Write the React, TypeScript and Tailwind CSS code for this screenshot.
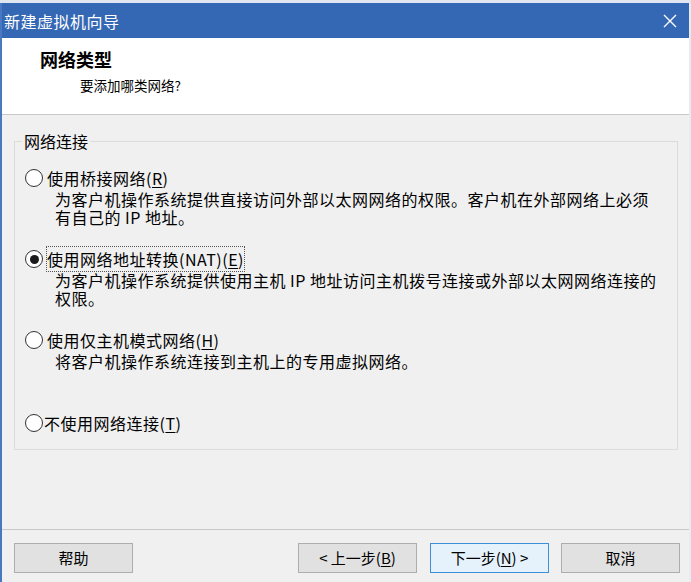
import React from "react";

const font = { fontFamily: '"Microsoft YaHei", "Noto Sans CJK SC", "Noto Sans", sans-serif' };

function Radio({ checked }: { checked?: boolean }) {
  return (
    <span className="w-[18px] h-[18px] rounded-full border border-[#333333] bg-white flex items-center justify-center shrink-0">
      {checked && <span className="w-[9px] h-[9px] rounded-full bg-[#1a1a1a]" />}
    </span>
  );
}

function U({ c }: { c: string }) {
  return <span className="underline underline-offset-2">{c}</span>;
}

function Btn({ children, primary, className = "" }: { children: React.ReactNode; primary?: boolean; className?: string }) {
  return (
    <div
      className={
        "h-[30px] w-[119px] flex items-center justify-center text-[15px] text-black border " +
        (primary ? "border-[#3c8fd9] bg-[#e5f1fb]" : "border-[#adadad] bg-[#e1e1e1]") +
        " " +
        className
      }
    >
      {children}
    </div>
  );
}

function Desc({ lines }: { lines: string[] }) {
  return (
    <div className="pl-[30px] mt-[1px] tracking-[0.5px]">
      {lines.map((l, i) => (
        <div key={i} className="h-[18px] leading-[18px] whitespace-nowrap">
          {l}
        </div>
      ))}
    </div>
  );
}

export default function App() {
  return (
    <div className="w-[691px] h-[582px] bg-[#f0f0f0] flex flex-col overflow-hidden" style={font}>
      <div className="h-[3px] bg-[#dfe6f0]" />
      <div className="flex flex-1 min-h-0">
        <div className="w-[2px] bg-[#4a78c0]" />
        <div className="flex-1 flex flex-col min-w-0">
          {/* title bar */}
          <div className="h-[35px] bg-[#3568b4] flex items-center justify-between pl-[2px] pr-[12px]">
            <span className="text-white text-[16px] tracking-[0.5px] leading-none">新建虚拟机向导</span>
            <svg width="14" height="14" viewBox="0 0 14 14">
              <path d="M1 1 L13 13 M13 1 L1 13" stroke="white" strokeWidth="1.4" />
            </svg>
          </div>
          {/* header */}
          <div className="h-[77px] bg-white border-b border-[#c8c8c8] pl-[38px] pt-[9px]">
            <div className="text-[18px] font-bold text-black leading-[24px]">网络类型</div>
            <div className="text-[13.5px] text-black leading-[22px] pl-[40px] mt-[3px]">要添加哪类网络?</div>
          </div>
          {/* body */}
          <div className="flex-1 flex flex-col">
            <div className="pl-[12px] pr-[11px] pt-[14px] h-[414px]">
              <div className="relative h-[309px] border border-[#dcdcdc] mt-[12px]">
                <span className="absolute -top-[12px] left-[7px] bg-[#f0f0f0] px-[2px] text-[16px] leading-[22px] text-black">网络连接</span>
                <div className="pt-[25px] pl-[10px] text-[16px] text-black">
                  <div className="flex items-center gap-[4px] h-[22px] tracking-[0.5px]">
                    <Radio />
                    <span>使用桥接网络(<U c="R" />)</span>
                  </div>
                  <Desc lines={["为客户机操作系统提供直接访问外部以太网网络的权限。客户机在外部网络上必须", "有自己的 IP 地址。"]} />

                  <div className="flex items-center gap-[4px] h-[22px] mt-[22px] tracking-[0.5px]">
                    <Radio checked />
                    <span className="outline outline-1 outline-dotted outline-[#555]">使用网络地址转换(NAT)(<U c="E" />)</span>
                  </div>
                  <Desc lines={["为客户机操作系统提供使用主机 IP 地址访问主机拨号连接或外部以太网网络连接的", "权限。"]} />

                  <div className="flex items-center gap-[4px] h-[22px] mt-[22px] tracking-[0.5px]">
                    <Radio />
                    <span>使用仅主机模式网络(<U c="H" />)</span>
                  </div>
                  <Desc lines={["将客户机操作系统连接到主机上的专用虚拟网络。"]} />

                  <div className="flex items-center gap-[1px] h-[22px] mt-[42px] tracking-[0.5px]">
                    <Radio />
                    <span>不使用网络连接(<U c="T" />)</span>
                  </div>
                </div>
              </div>
            </div>
            <div className="border-t border-[#c8c8c8] h-px" />
            <div className="flex items-center pl-[12px] pr-[9px] pt-[13px]">
              <Btn>帮助</Btn>
              <div className="flex-1" />
              <Btn>&lt; 上一步(<U c="B" />)</Btn>
              <Btn primary className="ml-[13px]">下一步(<U c="N" />) &gt;</Btn>
              <Btn className="ml-[12px]">取消</Btn>
            </div>
          </div>
        </div>
        <div className="w-[2px] bg-[#e6ecf2]" />
      </div>
    </div>
  );
}
